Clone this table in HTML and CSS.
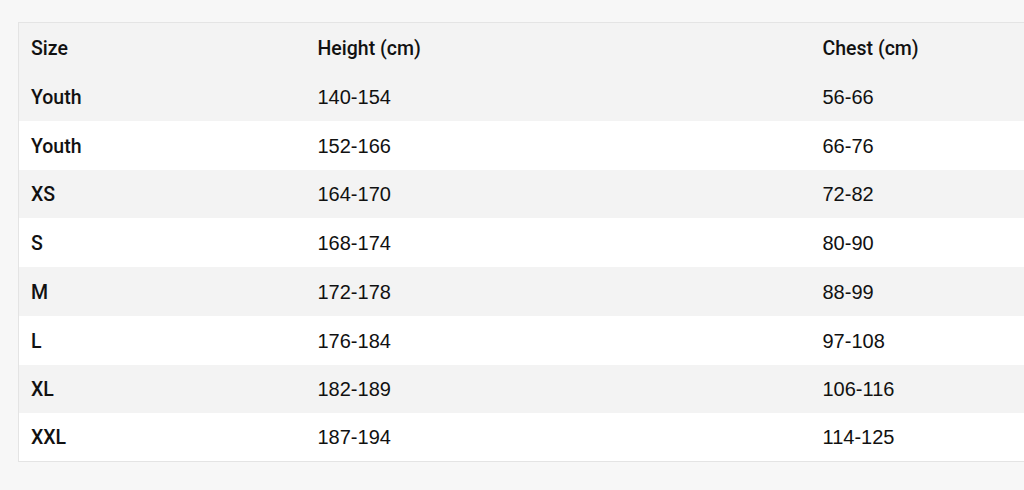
FILE: index.html
```html
<!DOCTYPE html>
<html lang="en">
<head>
<meta charset="utf-8">
<title>Size chart</title>
<link rel="stylesheet" href="styles.css">
</head>
<body>
<div class="wrap">
<table class="size-table">
<colgroup><col class="c1"><col class="c2"><col class="c3"></colgroup>
<thead>
<tr><th>Size</th><th>Height (cm)</th><th>Chest (cm)</th></tr>
</thead>
<tbody>
<tr><th>Youth</th><td>140-154</td><td>56-66</td></tr>
<tr><th>Youth</th><td>152-166</td><td>66-76</td></tr>
<tr class="short"><th>XS</th><td>164-170</td><td>72-82</td></tr>
<tr><th>S</th><td>168-174</td><td>80-90</td></tr>
<tr><th>M</th><td>172-178</td><td>88-99</td></tr>
<tr><th>L</th><td>176-184</td><td>97-108</td></tr>
<tr class="short"><th>XL</th><td>182-189</td><td>106-116</td></tr>
<tr><th>XXL</th><td>187-194</td><td>114-125</td></tr>
</tbody>
</table>
</div>
</body>
</html>
```
FILE: styles.css
```css
html, body {
  margin: 0;
  padding: 0;
  background: #f7f7f7;
  overflow: hidden;
}
body {
  font-family: Roboto, "Liberation Sans", Arial, sans-serif;
  color: #111;
}
.wrap {
  padding: 22px 0 0 18px;
  width: 1300px;
}
.size-table {
  border-collapse: collapse;
  table-layout: fixed;
  width: 1200px;
  border: 1px solid #e4e4e4;
  font-size: 19.5px;
}
.c1 { width: 287px; }
.c2 { width: 505px; }
.c3 { width: 408px; }
.size-table tr { height: 49px; }
.size-table tr.short { height: 48px; }
.size-table th,
.size-table td {
  text-align: left;
  padding: 2px 12px 0;
  box-sizing: border-box;
  vertical-align: middle;
}
.size-table th { font-weight: 500; }
.size-table td {
  font-weight: 400;
  font-family: "Liberation Sans", Arial, sans-serif;
  font-size: 20px;
}
.size-table thead tr { background: #f3f3f3; }
.size-table tbody tr:nth-child(odd) { background: #f3f3f3; }
.size-table tbody tr:nth-child(even) { background: #ffffff; }
```
